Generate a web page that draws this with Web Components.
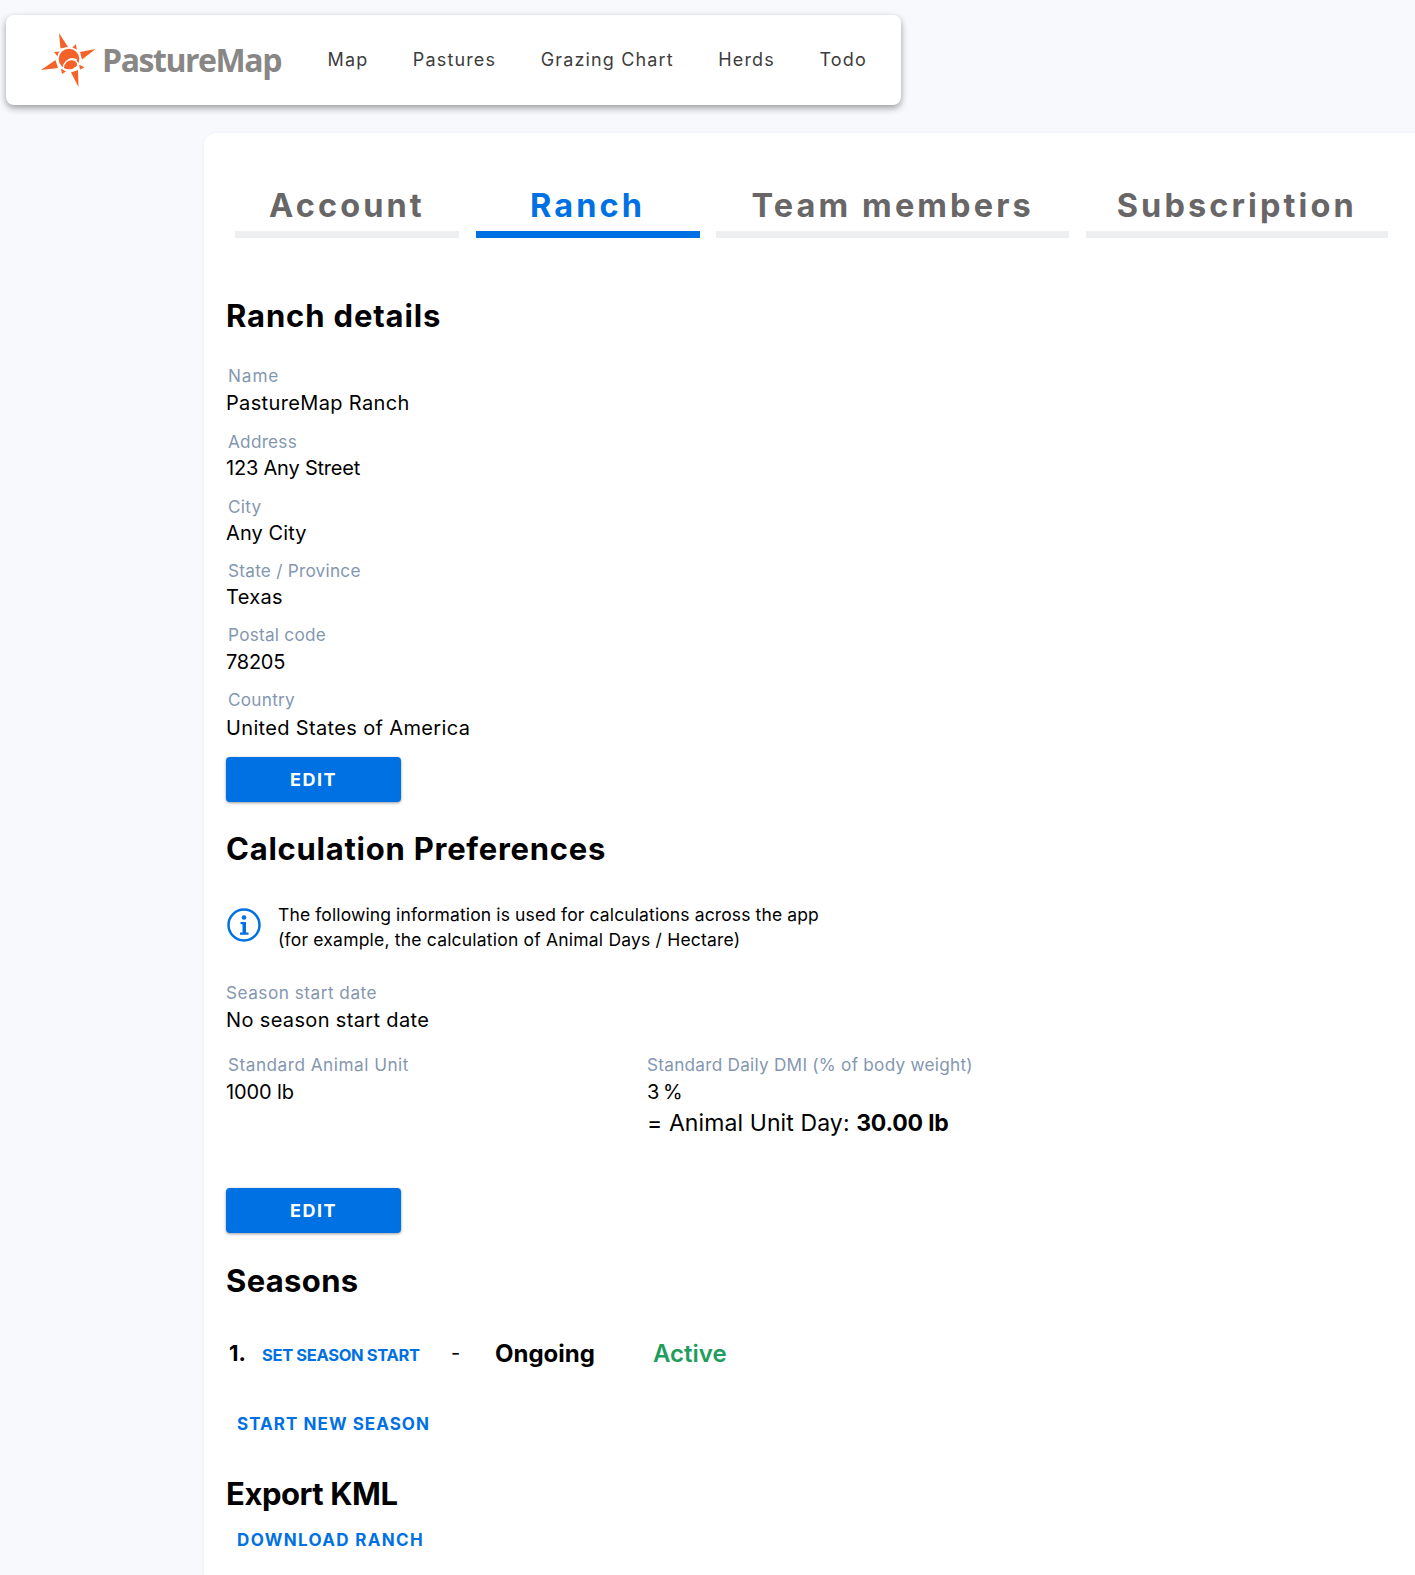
<!DOCTYPE html>
<html lang="en">
<head>
<meta charset="utf-8">
<title>PastureMap</title>
<style>
  html, body { margin: 0; background: #f8f9fd; }
  body { font-family: Inter, "Open Sans", sans-serif; color: #000; height: 1575px; overflow: hidden; }
</style>
</head>
<body>
<pm-header>
  <pm-nav-link>Map</pm-nav-link>
  <pm-nav-link>Pastures</pm-nav-link>
  <pm-nav-link>Grazing Chart</pm-nav-link>
  <pm-nav-link>Herds</pm-nav-link>
  <pm-nav-link>Todo</pm-nav-link>
</pm-header>
<pm-card>
  <pm-tabs>
    <pm-tab style="--w:224px">Account</pm-tab>
    <pm-tab style="--w:224px" active>Ranch</pm-tab>
    <pm-tab style="--w:353px">Team members</pm-tab>
    <pm-tab style="--w:302px">Subscription</pm-tab>
  </pm-tabs>

  <pm-heading style="--top:56px;--ls:.85px">Ranch details</pm-heading>
  <pm-field style="--top:24px;--h:66px;--vt:1px;--lls:.9px" label="Name">PastureMap Ranch</pm-field>
  <pm-field style="--vs:-.2px" label="Address">123 Any Street</pm-field>
  <pm-field style="--h:64px;--vs:.1px" label="City">Any City</pm-field>
  <pm-field style="--h:64px" label="State / Province">Texas</pm-field>
  <pm-field style="--vt:1px;--vs:-.25px" label="Postal code">78205</pm-field>
  <pm-field style="--vt:2px" label="Country">United States of America</pm-field>
  <pm-button style="--top:6px">EDIT</pm-button>

  <pm-heading style="--top:25px;--ls:.75px">Calculation Preferences</pm-heading>
  <pm-info>The following information is used for calculations across the app<br><span style="letter-spacing:.2px">(for example, the calculation of Animal Days / Hectare)</span></pm-info>
  <pm-field style="--top:27px;--h:66px;--vt:1px;--lls:.5px" label="Season start date" flush>No season start date</pm-field>
  <pm-columns>
    <pm-field style="--vt:1px;--lls:.5px;--vs:-.1px" label="Standard Animal Unit">1000 lb</pm-field>
    <div>
      <pm-field style="--h:55px;--vt:1px;--vs:-1px" label="Standard Daily DMI (% of body weight)" flush>3 %</pm-field>
      <pm-result>= Animal Unit Day: <b>30.00 lb</b></pm-result>
    </div>
  </pm-columns>
  <pm-button style="--top:49px">EDIT</pm-button>

  <pm-heading style="--top:26px;--ls:.35px">Seasons</pm-heading>
  <pm-season>
    <span slot="num">1.</span>
    <span slot="start">SET SEASON START</span>
    <span slot="end">Ongoing</span>
    <span slot="status">Active</span>
  </pm-season>
  <pm-link style="--top:39px;--ls:1.05px">START NEW SEASON</pm-link>

  <pm-heading style="--top:36px;--ls:-.45px">Export KML</pm-heading>
  <pm-link style="--top:12px;--ls:1.35px">DOWNLOAD RANCH</pm-link>
</pm-card>

<script>
function sheet(css) {
  return `<style>${css}</style>`;
}

class PmHeader extends HTMLElement {
  constructor() {
    super();
    this.attachShadow({mode: "open"});
    this.shadowRoot.innerHTML = sheet(`
      :host { display: flex; align-items: center; width: 895px; height: 90px; margin: 15px 0 28px 6px;
        background: #fff; border-radius: 8px; box-shadow: 0 3px 7px rgba(0,0,0,.38); box-sizing: border-box; }
      svg { width: 56px; height: 56px; margin-left: 34px; flex: none; }
      .name { font: 700 32px "Open Sans", sans-serif; color: #888786; letter-spacing: -1.450px; margin: -2px 47.500px 0 6px; width: 178px; flex: none; }
      nav { display: flex; gap: 44.500px; margin-top: -1px; }
    `) + `
      <svg viewBox="40 32 56 56" aria-hidden="true">
        <g fill="#f4622a">
          <path d="M59 33 L60.500 48.500 L68 47 Z"/>
          <path d="M95.500 49 L80 52 L82 59.500 Z"/>
          <path d="M78.500 87 L78 70 L71 72.500 Z"/>
          <path d="M41 70 L58 68 L55.500 60 Z"/>
          <path d="M76 44 L71.500 48.500 L77 52 Z"/>
          <path d="M54 52 L60 51.500 L58 57 Z"/>
          <path d="M62 74 L61 68.500 L66 71.500 Z"/>
          <path d="M84.500 67.500 L79 64.500 L80 69.500 Z"/>
        </g>
        <circle cx="69" cy="59" r="12" fill="#fff"/>
        <circle cx="69" cy="59" r="10.300" fill="#f4622a"/>
        <path d="M63 68.500 C63.500 63 67 59.500 71.500 59.500 C75 59.500 77.500 62 78 65 M67 61.500 C69 58.500 73.500 57.500 77 60" fill="none" stroke="#fff" stroke-width="1.300"/>
      </svg>
      <span class="name">PastureMap</span>
      <nav><slot></slot></nav>
    `;
  }
}

class PmNavLink extends HTMLElement {
  constructor() {
    super();
    this.attachShadow({mode: "open"});
    this.shadowRoot.innerHTML = sheet(`
      :host { display: block; font: 400 18px Inter, sans-serif; color: #3d3d3d; letter-spacing: 1.150px; }
    `) + `<slot></slot>`;
  }
}

class PmCard extends HTMLElement {
  constructor() {
    super();
    this.attachShadow({mode: "open"});
    this.shadowRoot.innerHTML = sheet(`
      :host { display: block; margin-left: 204px; padding: 0 0 60px 22px; background: #fff;
        border-top-left-radius: 12px; box-shadow: 0 0 3px rgba(80,90,140,.08); }
    `) + `<slot></slot>`;
  }
}

class PmTabs extends HTMLElement {
  constructor() {
    super();
    this.attachShadow({mode: "open"});
    this.shadowRoot.innerHTML = sheet(`
      :host { display: flex; gap: 16.600px; padding: 0 0 0 9px; }
    `) + `<slot></slot>`;
  }
}

class PmTab extends HTMLElement {
  constructor() {
    super();
    this.attachShadow({mode: "open"});
    this.shadowRoot.innerHTML = sheet(`
      :host { display: flex; justify-content: center; align-items: flex-end; flex: none; width: var(--w); height: 105px;
        box-sizing: border-box; padding-bottom: 6px; border-bottom: 7px solid #eeeff1;
        font: 700 32.500px Inter, sans-serif; letter-spacing: 3.100px; color: #686666; }
      :host([active]) { color: #0071e3; border-bottom-color: #0071e3; }
    `) + `<slot></slot>`;
  }
}

class PmHeading extends HTMLElement {
  constructor() {
    super();
    this.attachShadow({mode: "open"});
    this.shadowRoot.innerHTML = sheet(`
      :host { display: block; margin-top: var(--top, 0); font: 700 31px/44px Inter, sans-serif; letter-spacing: var(--ls, 0); color: #000; }
    `) + `<slot></slot>`;
  }
}

class PmField extends HTMLElement {
  constructor() {
    super();
    this.attachShadow({mode: "open"});
    const label = this.getAttribute("label") || "";
    this.shadowRoot.innerHTML = sheet(`
      :host { display: block; margin-top: var(--top, 0); height: var(--h, 65px); }
      .label { padding-left: 2px; font: 400 17.200px/27px Inter, sans-serif; letter-spacing: var(--lls, .25px); color: #8497b0; }
      :host([flush]) .label { padding-left: 0; }
      .value { padding-top: var(--vt, 0); font: 400 20px/27px Inter, sans-serif; letter-spacing: var(--vs, .35px); color: #000; }
    `) + `<div class="label"></div><div class="value"><slot></slot></div>`;
    this.shadowRoot.querySelector(".label").textContent = label;
  }
}

class PmButton extends HTMLElement {
  constructor() {
    super();
    this.attachShadow({mode: "open"});
    this.shadowRoot.innerHTML = sheet(`
      :host { display: flex; align-items: center; justify-content: center; width: 175px; height: 45px;
        margin-top: var(--top, 0); background: #0071e3; border-radius: 4px; box-shadow: 0 1px 3px rgba(0,0,0,.4);
        color: #fff; font: 700 18px Inter, sans-serif; letter-spacing: 1.500px; }
    `) + `<slot></slot>`;
  }
}

class PmInfo extends HTMLElement {
  constructor() {
    super();
    this.attachShadow({mode: "open"});
    this.shadowRoot.innerHTML = sheet(`
      :host { display: flex; align-items: center; gap: 17px; margin-top: 31px; padding-left: 1px;
        font: 400 17.500px/25px Inter, sans-serif; letter-spacing: .12px; color: #000; }
      svg { width: 34px; height: 34px; flex: none; margin-bottom: 4px; }
    `) + `
      <svg viewBox="0 0 34 34" aria-hidden="true">
        <circle cx="17" cy="17" r="15.500" fill="none" stroke="#0071e3" stroke-width="2.500"/>
        <circle cx="17" cy="9.500" r="2.300" fill="#0071e3"/>
        <path d="M13.500 14h5.500v10.500h2.500v2.200h-8.500v-2.200h2.500v-8.300h-2z" fill="#0071e3"/>
      </svg>
      <div><slot></slot></div>
    `;
  }
}

class PmColumns extends HTMLElement {
  constructor() {
    super();
    this.attachShadow({mode: "open"});
    this.shadowRoot.innerHTML = sheet(`
      :host { display: grid; grid-template-columns: 421px 1fr; margin-top: 6px; }
    `) + `<slot></slot>`;
  }
}

class PmResult extends HTMLElement {
  constructor() {
    super();
    this.attachShadow({mode: "open"});
    this.shadowRoot.innerHTML = sheet(`
      :host { display: block; margin-top: 1px; font: 400 23px/32px Inter, sans-serif; letter-spacing: .1px; color: #000; }
      ::slotted(b) { font-weight: 700; letter-spacing: -.2px; }
    `) + `<slot></slot>`;
  }
}

class PmSeason extends HTMLElement {
  constructor() {
    super();
    this.attachShadow({mode: "open"});
    this.shadowRoot.innerHTML = sheet(`
      :host { display: flex; align-items: center; height: 40px; margin-top: 30px; padding-left: 3px; color: #000; }
      .num { width: 33px; font: 700 22px Inter, sans-serif; }
      .start { width: 189px; font: 700 16.500px Inter, sans-serif; color: #0071e3; letter-spacing: -.35px; padding-top: 3px; }
      .dash { width: 44px; font: 400 20px Inter, sans-serif; }
      .end { width: 158px; font: 700 24px Inter, sans-serif; }
      .status { font: 600 24px Inter, sans-serif; color: #1f9d5c; }
    `) + `
      <span class="num"><slot name="num"></slot></span>
      <span class="start"><slot name="start"></slot></span>
      <span class="dash">-</span>
      <span class="end"><slot name="end"></slot></span>
      <span class="status"><slot name="status"></slot></span>
    `;
  }
}

class PmLink extends HTMLElement {
  constructor() {
    super();
    this.attachShadow({mode: "open"});
    this.shadowRoot.innerHTML = sheet(`
      :host { display: block; margin-top: var(--top, 0); padding-left: 11px; font: 700 17px/24px Inter, sans-serif;
        letter-spacing: var(--ls, 1.600px); color: #0071e3; }
    `) + `<slot></slot>`;
  }
}

customElements.define("pm-header", PmHeader);
customElements.define("pm-nav-link", PmNavLink);
customElements.define("pm-card", PmCard);
customElements.define("pm-tabs", PmTabs);
customElements.define("pm-tab", PmTab);
customElements.define("pm-heading", PmHeading);
customElements.define("pm-field", PmField);
customElements.define("pm-button", PmButton);
customElements.define("pm-info", PmInfo);
customElements.define("pm-columns", PmColumns);
customElements.define("pm-result", PmResult);
customElements.define("pm-season", PmSeason);
customElements.define("pm-link", PmLink);
</script>
</body>
</html>
